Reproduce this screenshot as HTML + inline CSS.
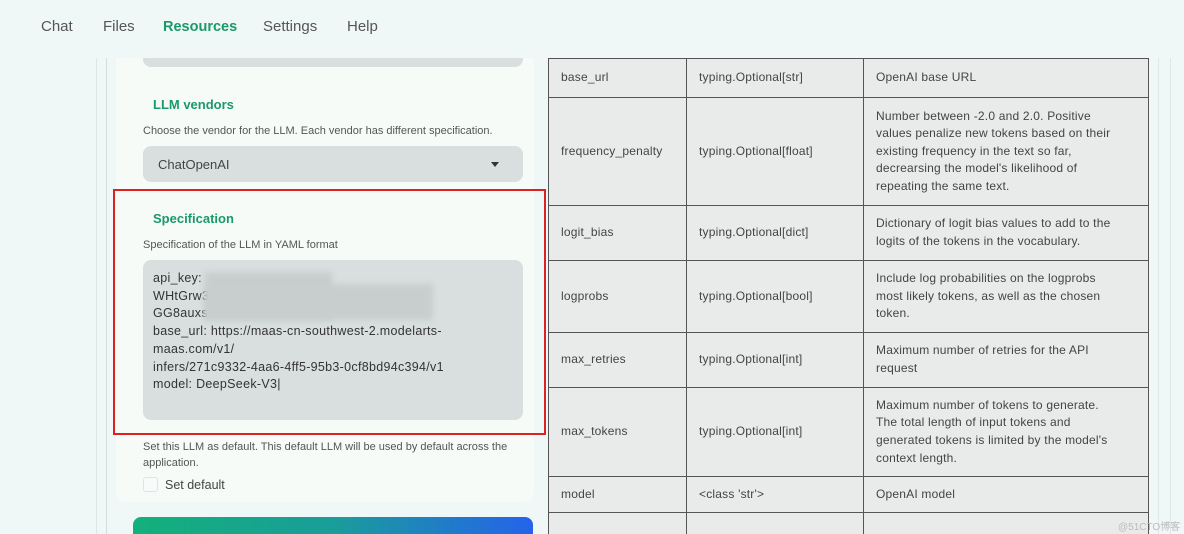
<!DOCTYPE html>
<html><head><meta charset="utf-8"><style>
*{margin:0;padding:0;box-sizing:border-box}
html,body{width:1184px;height:534px;overflow:hidden}
body{background:#f0f7f7;font-family:"Liberation Sans",sans-serif;color:#444;position:relative}
.a{position:absolute}
.nav{top:18px;font-size:15px;color:#555}
.cell{position:absolute;border:1px solid #555;background:#e8ebe9;font-size:12px;color:#444;line-height:17.6px;padding:0 12px;display:flex;align-items:center;white-space:nowrap;letter-spacing:0.2px}
.sm{font-size:11px;color:#555}
.ta{background:#d9dfdf;border-radius:8px}
</style></head><body>
<div class="a nav" style="left:41px">Chat</div>
<div class="a nav" style="left:103px">Files</div>
<div class="a nav" style="left:163px;color:#1a9a6a;font-weight:bold;font-size:14.5px;top:19px">Resources</div>
<div class="a nav" style="left:263px">Settings</div>
<div class="a nav" style="left:347px">Help</div>

<div class="a" style="left:96px;top:58px;width:1px;height:476px;background:#dde6e6"></div>
<div class="a" style="left:106px;top:58px;width:1px;height:476px;background:#d3dddd"></div>
<div class="a" style="left:116px;top:58px;width:418px;height:444px;background:#f6fbf8;border-radius:0 0 10px 10px"></div>
<div class="a ta" style="left:143px;top:50px;width:380px;height:17px;border-radius:0 0 8px 8px"></div>
<div class="a" style="left:116px;top:50px;width:420px;height:8px;background:#f0f7f7"></div>

<div class="a" style="left:153px;top:97px;font-size:13px;color:#1a9a6a;font-weight:bold">LLM vendors</div>
<div class="a sm" style="left:143px;top:125px">Choose the vendor for the LLM. Each vendor has different specification.</div>
<div class="a ta" style="left:143px;top:146px;width:380px;height:36px"></div>
<div class="a" style="left:158px;top:157px;font-size:13px;color:#444">ChatOpenAI</div>
<div class="a" style="left:491px;top:162px;width:0;height:0;border-left:4px solid transparent;border-right:4px solid transparent;border-top:5px solid #333"></div>

<div class="a" style="left:113px;top:189px;width:433px;height:246px;border:2px solid #e02020"></div>
<div class="a" style="left:153px;top:211px;font-size:13px;color:#1a9a6a;font-weight:bold">Specification</div>
<div class="a sm" style="left:143px;top:239px">Specification of the LLM in YAML format</div>
<div class="a ta" style="left:143px;top:260px;width:380px;height:160px"></div>
<div class="a" style="left:153px;top:270px;font-size:12.5px;line-height:17.7px;color:#333;letter-spacing:0.3px">api_key: <br>WHtGrw3<br>GG8auxsi<br>base_url: https://maas-cn-southwest-2.modelarts-<br>maas.com/v1/<br>infers/271c9332-4aa6-4ff5-95b3-0cf8bd94c394/v1<br>model: DeepSeek-V3|</div>
<div class="a" style="left:205px;top:272px;width:127px;height:48px;background:#c8cdcd;filter:blur(3px)"></div>
<div class="a" style="left:205px;top:284px;width:228px;height:36px;background:#c8cdcd;filter:blur(3px)"></div>

<div class="a sm" style="left:143px;top:440px;line-height:15.5px">Set this LLM as default. This default LLM will be used by default across the<br>application.</div>
<div class="a" style="left:143px;top:477px;width:15px;height:15px;border:1px solid #dde5e3;border-radius:3px;background:#f8fbfa"></div>
<div class="a" style="left:165px;top:478px;font-size:12.5px;color:#444">Set default</div>
<div class="a" style="left:133px;top:517px;width:400px;height:20px;border-radius:8px 8px 0 0;background:linear-gradient(90deg,#13b07a,#1a9d9a 50%,#2563eb)"></div>

<div class="a" style="left:1158px;top:58px;width:1px;height:476px;background:#dfe8e8"></div>
<div class="a" style="left:1170px;top:58px;width:1px;height:476px;background:#dfe8e8"></div>

<div class="cell" style="left:548px;top:58px;width:139px;height:40px">base_url</div>
<div class="cell" style="left:686px;top:58px;width:178px;height:40px">typing.Optional[str]</div>
<div class="cell" style="left:863px;top:58px;width:286px;height:40px">OpenAI base URL</div>

<div class="cell" style="left:548px;top:97px;width:139px;height:109px">frequency_penalty</div>
<div class="cell" style="left:686px;top:97px;width:178px;height:109px">typing.Optional[float]</div>
<div class="cell" style="left:863px;top:97px;width:286px;height:109px">Number between -2.0 and 2.0. Positive<br>values penalize new tokens based on their<br>existing frequency in the text so far,<br>decrearsing the model's likelihood of<br>repeating the same text.</div>

<div class="cell" style="left:548px;top:205px;width:139px;height:56px">logit_bias</div>
<div class="cell" style="left:686px;top:205px;width:178px;height:56px">typing.Optional[dict]</div>
<div class="cell" style="left:863px;top:205px;width:286px;height:56px">Dictionary of logit bias values to add to the<br>logits of the tokens in the vocabulary.</div>

<div class="cell" style="left:548px;top:260px;width:139px;height:73px">logprobs</div>
<div class="cell" style="left:686px;top:260px;width:178px;height:73px">typing.Optional[bool]</div>
<div class="cell" style="left:863px;top:260px;width:286px;height:73px">Include log probabilities on the logprobs<br>most likely tokens, as well as the chosen<br>token.</div>

<div class="cell" style="left:548px;top:332px;width:139px;height:56px">max_retries</div>
<div class="cell" style="left:686px;top:332px;width:178px;height:56px">typing.Optional[int]</div>
<div class="cell" style="left:863px;top:332px;width:286px;height:56px">Maximum number of retries for the API<br>request</div>

<div class="cell" style="left:548px;top:387px;width:139px;height:90px">max_tokens</div>
<div class="cell" style="left:686px;top:387px;width:178px;height:90px">typing.Optional[int]</div>
<div class="cell" style="left:863px;top:387px;width:286px;height:90px">Maximum number of tokens to generate.<br>The total length of input tokens and<br>generated tokens is limited by the model's<br>context length.</div>

<div class="cell" style="left:548px;top:476px;width:139px;height:37px">model</div>
<div class="cell" style="left:686px;top:476px;width:178px;height:37px">&lt;class 'str'&gt;</div>
<div class="cell" style="left:863px;top:476px;width:286px;height:37px">OpenAI model</div>

<div class="cell" style="left:548px;top:512px;width:139px;height:40px"></div>
<div class="cell" style="left:686px;top:512px;width:178px;height:40px"></div>
<div class="cell" style="left:863px;top:512px;width:286px;height:40px"></div>
<div class="a" style="left:1118px;top:518px;font-size:10px;color:#bbb;font-family:'Liberation Sans','Noto Sans CJK SC',sans-serif">@51CTO博客</div>
</body></html>
